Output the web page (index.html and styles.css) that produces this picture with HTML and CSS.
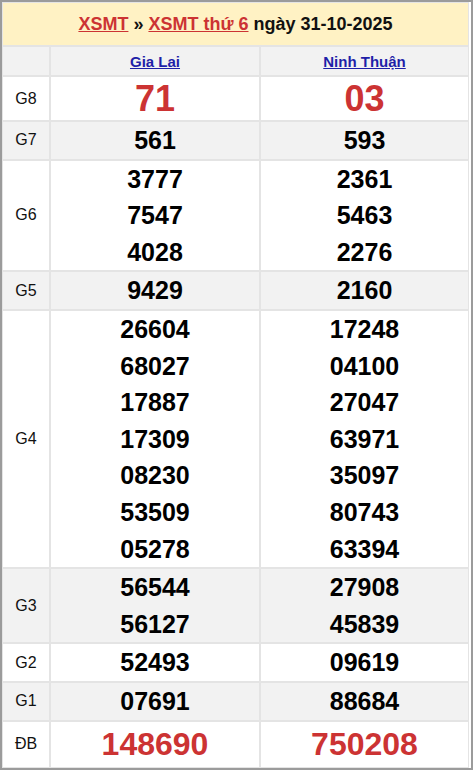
FILE: index.html
```html
<!DOCTYPE html>
<html lang="vi">
<head>
<meta charset="utf-8">
<title>XSMT thứ 6 ngày 31-10-2025</title>
<link rel="stylesheet" href="styles.css">
</head>
<body>
<div class="frame">
<table class="kq">
  <colgroup>
    <col class="c-lbl">
    <col class="c-p1">
    <col class="c-p2">
  </colgroup>
  <tr class="title-row">
    <td colspan="3" class="title"><a href="#">XSMT</a> » <a href="#">XSMT thứ 6</a> ngày 31-10-2025</td>
  </tr>
  <tr class="head-row alt">
    <td class="lbl"></td>
    <td class="prov"><a href="#">Gia Lai</a></td>
    <td class="prov"><a href="#">Ninh Thuận</a></td>
  </tr>
  <tr class="g8">
    <td class="lbl">G8</td>
    <td class="num big red"><div>71</div></td>
    <td class="num big red"><div>03</div></td>
  </tr>
  <tr class="alt">
    <td class="lbl">G7</td>
    <td class="num"><div>561</div></td>
    <td class="num"><div>593</div></td>
  </tr>
  <tr>
    <td class="lbl">G6</td>
    <td class="num"><div>3777</div><div>7547</div><div>4028</div></td>
    <td class="num"><div>2361</div><div>5463</div><div>2276</div></td>
  </tr>
  <tr class="alt">
    <td class="lbl">G5</td>
    <td class="num"><div>9429</div></td>
    <td class="num"><div>2160</div></td>
  </tr>
  <tr>
    <td class="lbl">G4</td>
    <td class="num"><div>26604</div><div>68027</div><div>17887</div><div>17309</div><div>08230</div><div>53509</div><div>05278</div></td>
    <td class="num"><div>17248</div><div>04100</div><div>27047</div><div>63971</div><div>35097</div><div>80743</div><div>63394</div></td>
  </tr>
  <tr class="alt">
    <td class="lbl">G3</td>
    <td class="num"><div>56544</div><div>56127</div></td>
    <td class="num"><div>27908</div><div>45839</div></td>
  </tr>
  <tr>
    <td class="lbl">G2</td>
    <td class="num"><div>52493</div></td>
    <td class="num"><div>09619</div></td>
  </tr>
  <tr class="alt">
    <td class="lbl">G1</td>
    <td class="num"><div>07691</div></td>
    <td class="num"><div>88684</div></td>
  </tr>
  <tr class="db">
    <td class="lbl">ĐB</td>
    <td class="num db-num red"><div>148690</div></td>
    <td class="num db-num red"><div>750208</div></td>
  </tr>
</table>
</div>
</body>
</html>
```

FILE: styles.css
```css
html, body {
  margin: 0;
  padding: 0;
  background: #ffffff;
}

.frame {
  width: 469px;
  height: 766px;
  border: 2px solid #9b9b9b;
  background: #ffffff;
  overflow: hidden;
}

.kq {
  width: 467px;
  border-collapse: separate;
  border-spacing: 0;
  font-family: "Liberation Sans", Arial, sans-serif;
  table-layout: fixed;
}

.c-lbl { width: 48px; }
.c-p1 { width: 210px; }
.c-p2 { width: 209px; }

.kq td {
  border: 1px solid #e4e4e4;
  padding: 0;
  text-align: center;
  vertical-align: middle;
}

.title-row td {
  background: #fff2c4;
  height: 42px;
  font-size: 18px;
  font-weight: bold;
  color: #111;
}

.title a {
  color: #cc3333;
  text-decoration: underline;
}

.alt td {
  background: #f2f2f2;
}

.head-row td {
  height: 28px;
}

.prov {
  font-size: 15px;
  font-weight: bold;
}

.prov a {
  color: #1f1fa8;
  text-decoration: underline;
}

.lbl {
  font-size: 16px;
  color: #111;
}

.num {
  font-size: 25px;
  font-weight: bold;
  color: #000;
}

.num div {
  line-height: 36.6px;
}

.g8 td {
  height: 43px;
}

.big div {
  font-size: 36px;
  line-height: 43px;
}

.db td {
  height: 45px;
}

.db-num div {
  font-size: 32px;
  line-height: 45px;
}

.red {
  color: #cc3333;
}
```
